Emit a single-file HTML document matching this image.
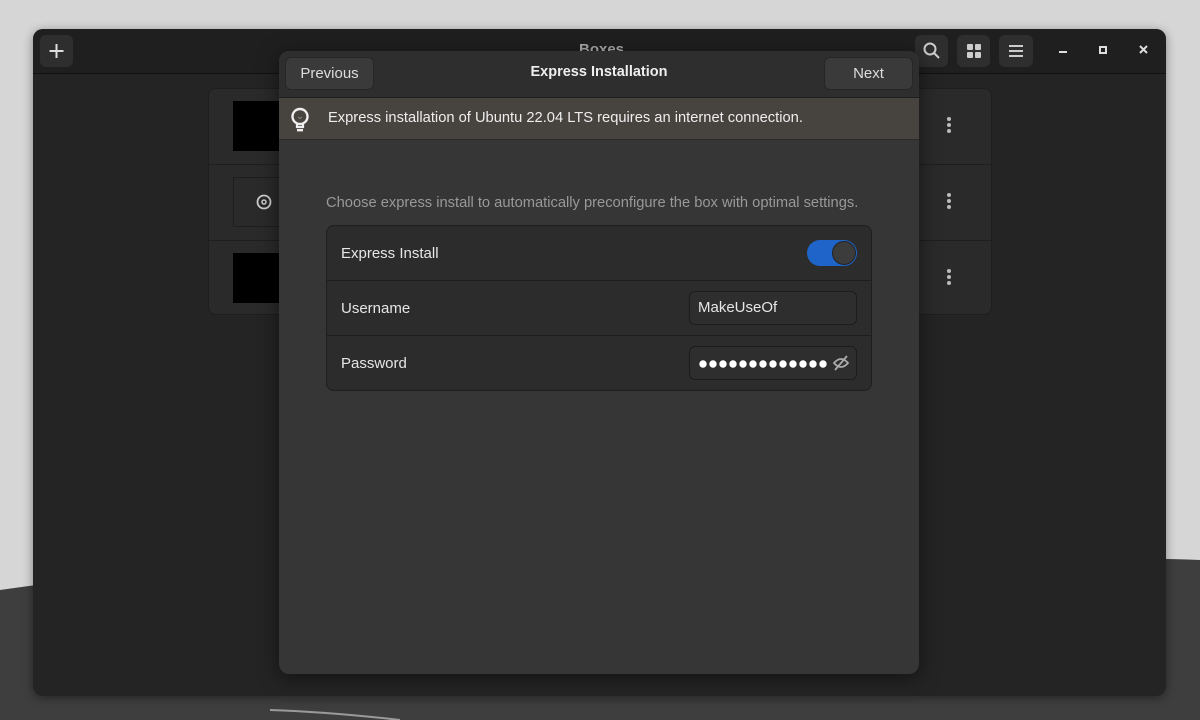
<!DOCTYPE html>
<html><head><meta charset="utf-8"><style>
*{box-sizing:border-box;margin:0;padding:0}
body{width:1200px;height:720px;overflow:hidden;position:relative;font-family:"Liberation Sans",sans-serif;background:#d6d6d6}
.abs{position:absolute}
.win{left:33px;top:29px;width:1133px;height:667px;background:#242424;border-radius:10px;overflow:hidden;box-shadow:0 2px 10px rgba(0,0,0,.4)}
.hdr{left:0;top:0;width:1133px;height:45px;background:#1f1f1f;border-bottom:1px solid #111}
.btn{background:#2e2e2e;border-radius:6px;color:#ddd}
.dlg{left:279px;top:51px;width:640px;height:623px;background:#363636;border-radius:10px;overflow:hidden;box-shadow:0 4px 20px rgba(0,0,0,.5)}
.dh{left:0;top:0;width:640px;height:47px;background:#2e2e2e;border-bottom:1px solid #1e1e1e}
.dbtn{background:#3a3a3a;border-radius:6px;color:#ddd;font-size:15px;text-align:center;line-height:32px;height:33px;border:1px solid #262626}
.row{position:absolute;left:0;width:545px;height:55px;color:#e6e6e6;font-size:15px;padding-left:14px;line-height:55px}
.ent{position:absolute;left:362px;width:168px;height:34px;background:#2e2e2e;border:1px solid #1c1c1c;border-radius:6px;color:#e6e6e6;font-size:15px;line-height:32px;padding-left:8px}
</style></head><body>
<svg class="abs" style="left:0;top:0" width="1200" height="720"><path d="M0 590 Q200 560 420 575 Q700 590 900 570 Q1100 555 1200 560 L1200 720 L0 720Z" fill="#3e3e3e"/><path d="M270 710 Q330 712 400 720" stroke="#9a9a9a" stroke-width="2" fill="none"/></svg>
<div class="abs win">
  <div class="abs hdr"></div>
  <div class="abs btn" style="left:7px;top:6px;width:33px;height:32px"><svg width="33" height="32"><path d="M16.5 9v14M9.5 16h14" stroke="#ddd" stroke-width="2"/></svg></div>
  <div class="abs" style="left:546px;top:12px;color:#aaa;font-size:15px;font-weight:bold">Boxes</div>
  <div class="abs btn" style="left:882px;top:6px;width:33px;height:32px"><svg width="33" height="32"><circle cx="15" cy="14" r="5.5" stroke="#ccc" stroke-width="2" fill="none"/><path d="M19 18l5 5" stroke="#ccc" stroke-width="2"/></svg></div>
  <div class="abs btn" style="left:924px;top:6px;width:33px;height:32px"><svg width="33" height="32"><rect x="10" y="9" width="6" height="6" rx="1" fill="#ccc"/><rect x="18" y="9" width="6" height="6" rx="1" fill="#ccc"/><rect x="10" y="17" width="6" height="6" rx="1" fill="#ccc"/><rect x="18" y="17" width="6" height="6" rx="1" fill="#ccc"/></svg></div>
  <div class="abs btn" style="left:966px;top:6px;width:34px;height:32px"><svg width="34" height="32"><path d="M10 11h14M10 16h14M10 21h14" stroke="#ccc" stroke-width="2"/></svg></div>
  <svg class="abs" style="left:1020px;top:12px" width="100" height="20"><path d="M6 11h8" stroke="#ddd" stroke-width="2"/><rect x="47" y="6" width="6" height="6" stroke="#ddd" stroke-width="2" fill="none"/><path d="M87 5l7 7M94 5l-7 7" stroke="#ddd" stroke-width="2"/></svg>
  <div class="abs" style="left:175px;top:59px;width:784px;height:227px;background:#2a2a2a;border-radius:8px;border:1px solid #1e1e1e">
    <div class="abs" style="left:24px;top:12px;width:60px;height:50px;background:#000"></div>
    <div class="abs" style="left:0;top:75px;width:782px;height:1px;background:#1e1e1e"></div>
    <div class="abs" style="left:24px;top:88px;width:60px;height:50px;border:1px solid #1e1e1e"><svg width="60" height="50"><circle cx="30" cy="24" r="6.5" stroke="#ccc" stroke-width="1.8" fill="none"/><circle cx="30" cy="24" r="2" stroke="#ccc" stroke-width="1.5" fill="none"/></svg></div>
    <div class="abs" style="left:0;top:151px;width:782px;height:1px;background:#1e1e1e"></div>
    <div class="abs" style="left:24px;top:164px;width:60px;height:50px;background:#000"></div>
    <svg class="abs" style="left:733px;top:26px" width="16" height="180"><g fill="#bbb"><circle cx="7" cy="4" r="2"/><circle cx="7" cy="10" r="2"/><circle cx="7" cy="16" r="2"/><circle cx="7" cy="80" r="2"/><circle cx="7" cy="86" r="2"/><circle cx="7" cy="92" r="2"/><circle cx="7" cy="156" r="2"/><circle cx="7" cy="162" r="2"/><circle cx="7" cy="168" r="2"/></g></svg>
  </div>
</div>
<div class="abs dlg">
  <div class="abs dh"></div>
  <div class="abs dbtn" style="left:6px;top:6px;width:89px">Previous</div>
  <div class="abs" style="left:0;top:13px;width:640px;text-align:center;color:#eee;font-size:14.5px;font-weight:bold">Express Installation</div>
  <div class="abs dbtn" style="left:545px;top:6px;width:89px">Next</div>
  <div class="abs" style="left:0;top:47px;width:640px;height:42px;background:#47433f;border-bottom:1px solid #2a2a2a"></div>
  <svg class="abs" style="left:8px;top:55px" width="26" height="28"><circle cx="13" cy="10.5" r="7.5" stroke="#eee" stroke-width="2.4" fill="none"/><path d="M10 17v4h6v-4" stroke="#eee" stroke-width="2.2" fill="none"/><rect x="10" y="23" width="6" height="2.4" fill="#eee"/><path d="M11 11l2 1.5 2-1.5" stroke="#888" stroke-width="1" fill="none"/></svg>
  <div class="abs" style="left:49px;top:59px;color:#eee;font-size:14.7px">Express installation of Ubuntu 22.04 LTS requires an internet connection.</div>
  <div class="abs" style="left:47px;top:144px;color:#999;font-size:14.7px">Choose express install to automatically preconfigure the box with optimal settings.</div>
  <div class="abs" style="left:47px;top:174px;width:546px;height:166px;background:#2c2c2c;border:1px solid #1e1e1e;border-radius:8px">
    <div class="row" style="top:0">Express Install</div>
    <div class="abs" style="left:480px;top:14px;width:50px;height:26px;background:#1f64c8;border-radius:13px"><div class="abs" style="left:25px;top:1px;width:24px;height:24px;border-radius:12px;background:#3c3c3c;border:1px solid #222"></div></div>
    <div class="abs" style="left:0;top:54px;width:544px;height:1px;background:#1e1e1e"></div>
    <div class="row" style="top:55px">Username</div>
    <div class="ent" style="top:65px">MakeUseOf</div>
    <div class="abs" style="left:0;top:109px;width:544px;height:1px;background:#1e1e1e"></div>
    <div class="row" style="top:110px">Password</div>
    <div class="ent" style="top:120px;padding-left:0">
      <svg style="position:absolute;left:8px;top:10px" width="132" height="14"><g fill="#fff"><circle cx="5" cy="7" r="3.7"/><circle cx="15" cy="7" r="3.7"/><circle cx="25" cy="7" r="3.7"/><circle cx="35" cy="7" r="3.7"/><circle cx="45" cy="7" r="3.7"/><circle cx="55" cy="7" r="3.7"/><circle cx="65" cy="7" r="3.7"/><circle cx="75" cy="7" r="3.7"/><circle cx="85" cy="7" r="3.7"/><circle cx="95" cy="7" r="3.7"/><circle cx="105" cy="7" r="3.7"/><circle cx="115" cy="7" r="3.7"/><circle cx="125" cy="7" r="3.7"/></g></svg>
      <svg style="position:absolute;left:142px;top:8px" width="18" height="16"><path d="M2 8q7-8 14 0q-7 8-14 0z" stroke="#aaa" stroke-width="1.8" fill="none"/><path d="M3 15L15 1" stroke="#aaa" stroke-width="1.8"/></svg></div>
  </div>
</div>
</body></html>
